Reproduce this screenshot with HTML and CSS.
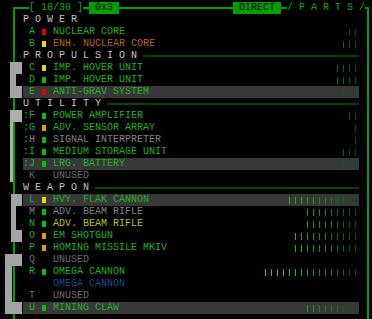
FILE: index.html
```html
<!DOCTYPE html>
<html>
<head>
  <title>Parts</title>
  <link rel="stylesheet" href="styles.css">
</head>
<body>
  <div class="panel">
    <div class="titlebar">
      <span class="tag">[ 18/30 ]</span>
      <span class="gap"></span>
      <span class="box">0x3</span>
      <span class="fill"></span>
      <span class="box">DIRECT</span>
      <span class="gap"></span>
      <span class="tag">/ P A R T S /</span>
    </div>

    <div class="list">
      <div class="sec">Power</div>
      <div class="row">
        <span class="pre"></span><span class="key">A</span><span class="sq red"></span>
        <span class="name">Nuclear Core</span>
        <span class="bars"><i></i><i></i></span>
      </div>
      <div class="row">
        <span class="pre"></span><span class="key">B</span><span class="sq yellow"></span>
        <span class="name orange">Enh. Nuclear Core</span>
        <span class="bars"><i></i><i></i><i></i></span>
      </div>

      <div class="sec">Propulsion<span class="rule"></span></div>
      <div class="group">
        <span class="bracket b1"></span>
        <div class="row">
          <span class="pre"></span><span class="key">C</span><span class="sq yellow"></span>
          <span class="name">Imp. Hover Unit</span>
          <span class="bars"><i></i><i></i><i></i><i></i></span>
        </div>
        <div class="row">
          <span class="pre"></span><span class="key">D</span><span class="sq green"></span>
          <span class="name">Imp. Hover Unit</span>
          <span class="bars"><i></i><i></i><i></i><i></i></span>
        </div>
        <div class="row hl">
          <span class="pre"></span><span class="key">E</span><span class="sq red"></span>
          <span class="name">Anti-Grav System</span>
          <span class="bars"><i></i><i></i><i></i></span>
        </div>
      </div>

      <div class="sec">Utility<span class="rule"></span></div>
      <div class="group">
        <span class="bracket b2"></span>
        <div class="row">
          <span class="pre">:</span><span class="key">F</span><span class="sq green"></span>
          <span class="name">Power Amplifier</span>
          <span class="bars"><i></i><i></i></span>
        </div>
        <div class="row">
          <span class="pre">:</span><span class="key">G</span><span class="sq amber"></span>
          <span class="name">Adv. Sensor Array</span>
          <span class="bars"><i></i></span>
        </div>
        <div class="row">
          <span class="pre gray">:</span><span class="key gray">H</span><span class="sq green"></span>
          <span class="name gray">Signal Interpreter</span>
          <span class="bars"><i></i></span>
        </div>
        <div class="row">
          <span class="pre">:</span><span class="key">I</span><span class="sq green"></span>
          <span class="name">Medium Storage Unit</span>
          <span class="bars"><i></i><i></i><i></i></span>
        </div>
        <div class="row hl">
          <span class="pre">:</span><span class="key">J</span><span class="sq green"></span>
          <span class="name">Lrg. Battery</span>
          <span class="bars"><i></i><i></i><i></i></span>
        </div>
        <div class="row">
          <span class="pre"></span><span class="key dim">K</span><span class="sq"></span>
          <span class="name dim">Unused</span>
        </div>
      </div>

      <div class="sec">Weapon<span class="rule"></span></div>
      <div class="group">
        <span class="bracket b3"></span>
        <div class="row hl">
          <span class="pre"></span><span class="key">L</span><span class="sq yellow"></span>
          <span class="name">Hvy. Flak Cannon</span>
          <span class="bars"><i></i><i></i><i></i><i></i><i></i><i></i><i></i><i></i><i></i><i></i><i></i><i></i></span>
        </div>
        <div class="row">
          <span class="pre"></span><span class="key gray">M</span><span class="sq green"></span>
          <span class="name gray">Adv. Beam Rifle</span>
          <span class="bars"><i></i><i></i><i></i><i></i><i></i><i></i><i></i><i></i><i></i></span>
        </div>
        <div class="row">
          <span class="pre"></span><span class="key">N</span><span class="sq green"></span>
          <span class="name lime">Adv. Beam Rifle</span>
          <span class="bars"><i></i><i></i><i></i><i></i><i></i><i></i><i></i><i></i><i></i></span>
        </div>
        <div class="row">
          <span class="pre"></span><span class="key">O</span><span class="sq amber"></span>
          <span class="name">EM Shotgun</span>
          <span class="bars"><i></i><i></i><i></i><i></i><i></i><i></i><i></i><i></i><i></i><i></i><i></i></span>
        </div>
      </div>
      <div class="row">
        <span class="pre"></span><span class="key">P</span><span class="sq amber"></span>
        <span class="name">Homing Missile MkIV</span>
        <span class="bars"><i></i><i></i><i></i><i></i><i></i><i></i><i></i><i></i><i></i><i></i><i></i></span>
      </div>
      <div class="group">
        <span class="bracket b4"></span>
        <div class="row">
          <span class="pre"></span><span class="key dim">Q</span><span class="sq"></span>
          <span class="name dim">Unused</span>
        </div>
        <div class="row">
          <span class="pre"></span><span class="key">R</span><span class="sq green"></span>
          <span class="name">Omega Cannon</span>
          <span class="bars"><i></i><i></i><i></i><i></i><i></i><i></i><i></i><i></i><i></i><i></i><i></i><i></i><i></i><i></i><i></i><i></i></span>
        </div>
        <div class="row">
          <span class="pre"></span><span class="key"></span><span class="sq"></span>
          <span class="name blue">Omega Cannon</span>
        </div>
        <div class="row">
          <span class="pre"></span><span class="key dim">T</span><span class="sq"></span>
          <span class="name dim">Unused</span>
        </div>
        <div class="row hl">
          <span class="pre"></span><span class="key">U</span><span class="sq green"></span>
          <span class="name">Mining Claw</span>
          <span class="bars"><i></i><i></i><i></i><i></i><i></i><i></i><i></i><i></i><i></i></span>
        </div>
      </div>
    </div>
  </div>
</body>
</html>
```

FILE: styles.css
```css
body {
  margin: 0;
  width: 372px;
  height: 319px;
  overflow: hidden;
  background: #000;
  color: #1fb01f;
  font-family: "Liberation Mono", monospace;
  font-size: 10px;
  line-height: 12px;
  text-transform: uppercase;
}

.panel {
  margin: 7px 3px 0 13px;
  height: 312px;
  border: 2px solid #00a000;
  border-bottom: 0;
}

.titlebar {
  display: flex;
  height: 12px;
  margin: -7px 2px 0 14px;
  text-transform: none;
  white-space: pre;
}
.tag {
  background: #000;
  color: #00b000;
}
.gap {
  width: 6px;
}
.fill {
  flex: 1;
}
.box {
  padding: 0 6px;
  background: #00a000;
  color: #000;
}

.list {
  margin: 0 8px;
}

.sec {
  display: flex;
  align-items: center;
  height: 12px;
  color: #c4c4c4;
  letter-spacing: 6px;
}
.rule {
  flex: 1;
  height: 2px;
  background: #004800;
}

.group {
  position: relative;
}
.bracket {
  position: absolute;
  top: 0;
  bottom: 0;
  box-sizing: border-box;
  border: 0 solid #a4a4a4;
}
.b1 {
  left: -13px;
  width: 12px;
  border-width: 12px 0 12px 6px;
}
.b2 {
  left: -13px;
  width: 12px;
  border-width: 12px 0 0 3px;
  border-color: #b0b0b0;
}
.b3 {
  left: -12px;
  width: 11px;
  border-width: 12px 0 12px 5px;
}
.b4 {
  left: -18px;
  width: 17px;
  border-width: 12px 0 12px 7px;
}

.row {
  display: flex;
  align-items: center;
  height: 12px;
  white-space: pre;
}
.hl {
  background: #383838;
}
.pre, .key {
  width: 6px;
  flex: none;
}
.sq {
  width: 4px;
  height: 6px;
  margin: 0 7px;
  flex: none;
}
.sq.red { background: #e00000; }
.sq.yellow { background: #e0e000; }
.sq.green { background: #00c000; }
.sq.amber { background: #e0a000; }

.gray { color: #808080; }
.dim { color: #6c6c6c; }
.orange { color: #b86414; }
.lime { color: #bcbc1c; }
.blue { color: #1e4a8c; }

.bars {
  display: flex;
  flex-direction: row-reverse;
  align-self: flex-start;
  margin-left: auto;
  padding-top: 3px;
}
.bars i {
  width: 1px;
  height: 7px;
  margin: 0 3px 0 2px;
  background: #2ad02a;
}
.bars i:nth-child(1) { background: #0d4d0d; }
.bars i:nth-child(2) { background: #0f590f; }
.bars i:nth-child(3) { background: #116311; }
.bars i:nth-child(4) { background: #136d13; }
.bars i:nth-child(5) { background: #157715; }
.bars i:nth-child(6) { background: #178117; }
.bars i:nth-child(7) { background: #198b19; }
.bars i:nth-child(8) { background: #1b951b; }
.bars i:nth-child(9) { background: #1d9f1d; }
.bars i:nth-child(10) { background: #1fa91f; }
.bars i:nth-child(11) { background: #22b322; }
.bars i:nth-child(12) { background: #26c026; }
```
